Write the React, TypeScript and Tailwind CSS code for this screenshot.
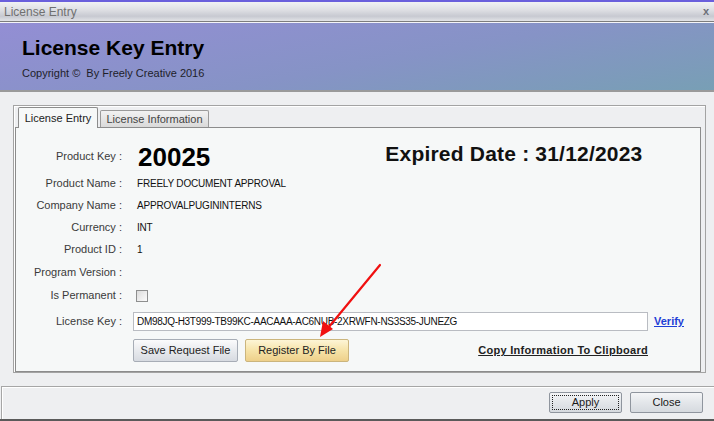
import React from "react";

const labelCls = "w-[106px] shrink-0 text-right text-[11px] text-[#3a3a3a]";

function Row({ label, h, children }: { label: string; h: string; children?: React.ReactNode }) {
  return (
    <div className={`flex items-center ${h}`}>
      <div className={labelCls}>{label} :</div>
      <div className="ml-[11px] flex items-center pl-[4px] text-[10px] tracking-[-0.2px] text-[#111]">{children}</div>
    </div>
  );
}

function WinButton({ label, focused }: { label: string; focused?: boolean }) {
  return (
    <button
      type="button"
      className="flex h-[21px] w-[73px] items-center justify-center rounded-[2px] border border-[#8f959e] bg-[linear-gradient(#f4f5f7,#e3e6ea_50%,#d6dadf)] p-[2px] text-[11px] text-[#1a1a1a]"
    >
      <span
        className={`flex h-full w-full items-center justify-center ${focused ? "border border-dotted border-[#222]" : ""}`}
      >
        {label}
      </span>
    </button>
  );
}

export default function App() {
  return (
    <div className="relative flex h-[421px] w-[714px] flex-col overflow-hidden border-t-2 border-[#6a5fdc] bg-[#eeeff1] font-['Liberation_Sans',Arial,sans-serif]">
      {/* title bar */}
      <div className="flex h-[19px] items-center justify-between bg-[linear-gradient(#f1f2f4,#dcdde2_45%,#c7c9d1_75%,#e2e3e7)] pl-[4px] pr-[5px]">
        <span className="text-[12px] text-[#707070]">License Entry</span>
        <span className="text-[11px] font-bold leading-none text-[#6b6f78]">x</span>
      </div>

      {/* banner */}
      <div className="border-t border-[#7d7d7d] border-b-2 border-b-[#9a9a9a]">
        <div className="h-[68px] border-t border-[#f4f4f8] bg-[linear-gradient(170deg,#938ed4,#8693c6_55%,#789fb5)] pl-[22px] pt-[12px]">
          <div className="text-[21px] font-bold leading-[26px] text-black">License Key Entry</div>
          <div className="mt-[4px] text-[11px] text-[#1e1e2a]">Copyright ©&nbsp; By Freely Creative 2016</div>
        </div>
      </div>

      {/* body */}
      <div className="flex flex-1 flex-col px-[11px] pt-[13px]">
        <div className="ml-[2px] mr-[-3px] flex h-[268px] flex-col border border-[#a3a3a3] pl-[1px] pr-[4px] pt-[1px] shadow-[inset_1px_1px_0_#fff]">
          {/* tabs */}
          <div className="relative z-10 ml-[3px] flex h-[20px] items-end">
            <div className="mb-[-1px] flex h-[21px] w-[80px] items-center justify-center rounded-t-[2px] border border-b-0 border-[#8c8c8c] bg-[#f6f8f8] text-[11px] text-[#222]">
              License Entry
            </div>
            <div className="ml-[2px] flex h-[17px] w-[109px] items-center justify-center rounded-t-[2px] border border-b-0 border-[#9a9a9a] bg-[linear-gradient(#f2f2f2,#dadada)] text-[11px] text-[#444]">
              License Information
            </div>
          </div>
          {/* panel */}
          <div className="flex-1 border border-[#8c8c8c] bg-[#f6f8f8] pt-[13px]">
            <div className="flex h-[31px] items-center">
              <div className={labelCls}>Product Key :</div>
              <div className="ml-[11px] pl-[5px] text-[26px] font-bold leading-none text-black">20025</div>
              <div className="ml-[175px] mt-[-6px] text-[21px] font-bold leading-none tracking-[0.2px] text-[#111]">Expired Date : 31/12/2023</div>
            </div>
            <Row label="Product Name" h="h-[22px]">FREELY DOCUMENT APPROVAL</Row>
            <Row label="Company Name" h="h-[22px]">APPROVALPUGININTERNS</Row>
            <Row label="Currency" h="h-[22px]">INT</Row>
            <Row label="Product ID" h="h-[23px]">1</Row>
            <Row label="Program Version" h="h-[22px]" />
            <div className="flex h-[25px] items-center">
              <div className={labelCls}>Is Permanent :</div>
              <div className="ml-[14px] h-[12px] w-[12px] border border-[#8e8f8f] bg-[linear-gradient(135deg,#dcdcdc,#fbfbfb)]" />
            </div>
            <div className="flex h-[26px] items-center">
              <div className={labelCls}>License Key :</div>
              <div className="ml-[11px] flex h-[19px] w-[515px] items-center border border-[#b9bcc2] bg-white pl-[3px] text-[10px] tracking-[-0.3px] text-[#111]">
                DM98JQ-H3T999-TB99KC-AACAAA-AC6NUB-2XRWFN-NS3S35-JUNEZG
              </div>
              <span className="ml-[6px] text-[11px] font-bold text-[#1f3fd6] underline">Verify</span>
            </div>
            <div className="ml-[117px] mt-[5px] flex w-[515px] items-center">
              <button
                type="button"
                className="h-[23px] w-[105px] rounded-[2px] border border-[#a7adb6] bg-[linear-gradient(#fbfbfc,#e8eaee_50%,#d7dbe1)] text-[11px] text-[#222]"
              >
                Save Request File
              </button>
              <button
                type="button"
                className="ml-[7px] h-[23px] w-[104px] rounded-[2px] border border-[#cbb57d] bg-[linear-gradient(#fdf5d6,#f6e3a8_50%,#eed08a)] text-[11px] text-[#222]"
              >
                Register By File
              </button>
              <span className="ml-auto text-[11px] font-bold tracking-[0.3px] text-[#222] underline">
                Copy Information To Clipboard
              </span>
            </div>
          </div>
        </div>
      </div>

      {/* footer */}
      <div className="ml-[1px] flex h-[33px] items-start justify-end gap-[8px] border-l border-t border-[#a6a6a6] pr-[11px] pt-[5px] shadow-[inset_1px_1px_0_#fff]">
        <WinButton label="Apply" focused />
        <WinButton label="Close" />
      </div>
      <div className="h-[2px] bg-[#5a5a5a]" />

      {/* annotation arrow */}
      <svg className="pointer-events-none absolute left-0 top-0" width="714" height="421">
        <line x1="380" y1="263" x2="328" y2="326" stroke="#f01010" strokeWidth="2.2" strokeLinecap="round" />
        <polygon points="320,335 323,319 333,327" fill="#f01010" />
      </svg>
    </div>
  );
}
